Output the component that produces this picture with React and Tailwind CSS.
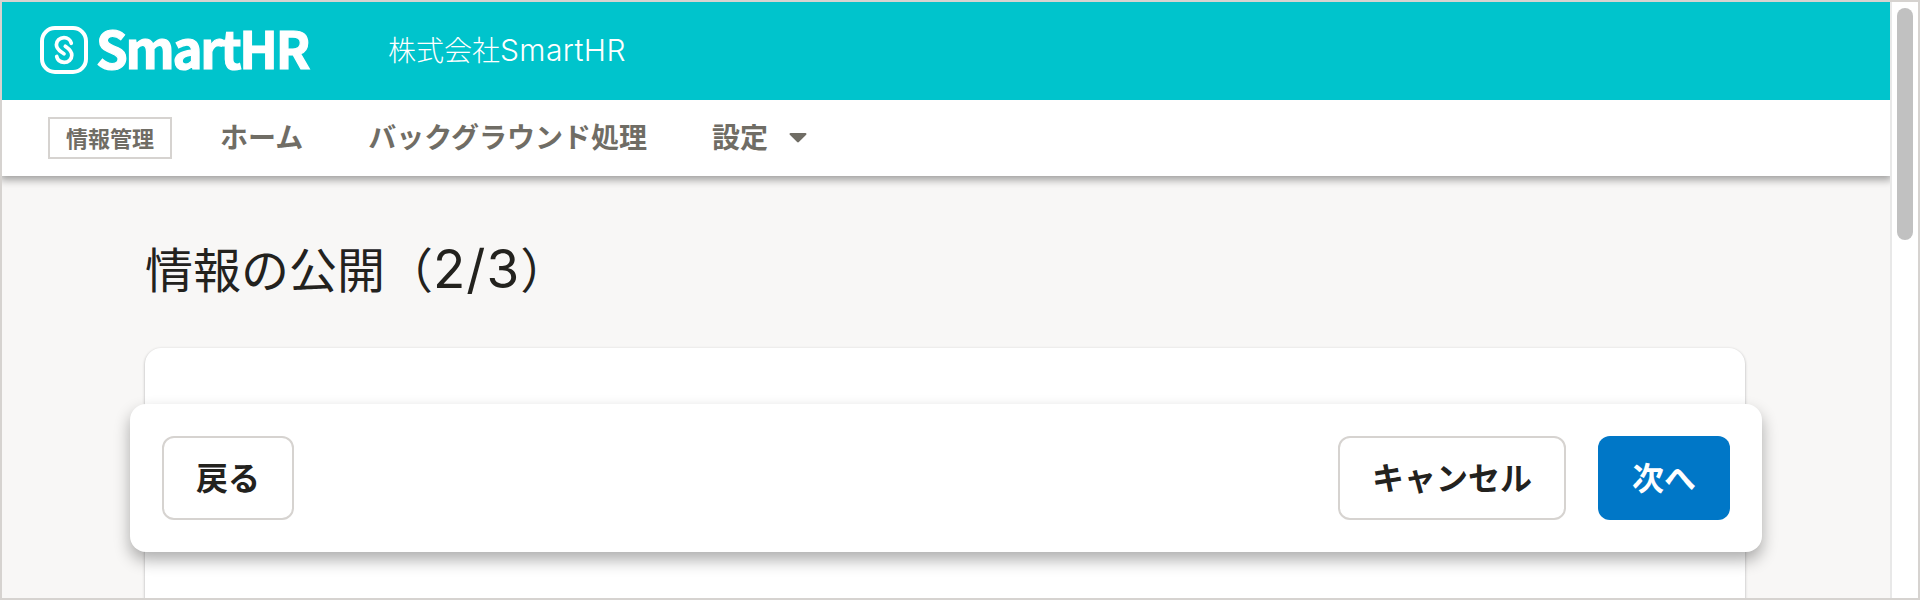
const navItem = "text-[28px] leading-[42px] font-bold whitespace-nowrap -mt-1";

function Logo() {
  return (
    <div className="-mt-0.5 flex items-center text-white">
      <svg width="48" height="48" viewBox="0 0 48 48" fill="none" stroke="currentColor">
        <rect x="2" y="2" width="44" height="44" rx="13" strokeWidth="4" />
        <path
          d="M31.300 17.300 C30.500 14 27.500 11.700 24 11.700 C19.800 11.700 16.400 14.700 16.400 18.800 C16.400 23.800 20.500 25.200 24 27.900 M25.300 20.300 C28.500 22.600 31.800 24.600 31.800 29.200 C31.800 33.300 28.400 36.300 24.200 36.300 C20.500 36.300 17.500 34 16.700 30.500"
          strokeWidth="3.7"
          strokeLinecap="round"
        />
      </svg>
      <span className="-mt-1.5 ml-2 w-[215px] whitespace-nowrap text-[51px] leading-[60px] font-bold tracking-[-2.300px] [-webkit-text-stroke:1.2px_white]">
        SmartHR
      </span>
    </div>
  );
}

function Button({ children, className }) {
  return (
    <button className={`flex h-[84px] items-center justify-center rounded-xl pb-1 text-[32px] leading-none font-bold ${className}`}>
      {children}
    </button>
  );
}

export default function App() {
  return (
    <div className="flex h-[600px] w-[1920px] overflow-hidden border-2 border-[#d6d3d0] bg-white font-['Noto_Sans_CJK_JP',sans-serif] text-[#23221e]">
      <div className="flex w-[1888px] flex-col overflow-hidden bg-[#f8f7f6]">
        <header className="relative z-10 flex h-[98px] shrink-0 items-center bg-[#00c4cc] pl-[38px] text-white">
          <Logo />
          <span className="-mt-1 ml-[77px] text-[28px] leading-[42px] font-light whitespace-nowrap">
            株式会社<span className="font-['Inter'] text-[30px] leading-none tracking-[0.4px]">SmartHR</span>
          </span>
        </header>
        <nav className="relative flex h-[76px] shrink-0 items-center bg-white pl-[46px] text-[#706d65] shadow-[0_2px_8px_2px_rgba(0,0,0,0.36)]">
          <span className="flex h-[42px] w-[124px] items-center justify-center border-2 border-[#d6d3d0] pb-0.5 text-[22px] leading-none font-bold">
            情報管理
          </span>
          <span className={`ml-12 ${navItem}`}>ホーム</span>
          <span className={`ml-[65px] ${navItem}`}>バックグラウンド処理</span>
          <span className={`ml-[65px] ${navItem}`}>設定</span>
          <svg className="ml-[21px]" width="18" height="10" viewBox="0 0 18 10" fill="currentColor">
            <path d="M1.600 0h14.800c1 0 1.400 1 .8 1.700L9.900 9c-.6.6-1.200.6-1.800 0L.8 1.700C.2 1 .6 0 1.600 0z" />
          </svg>
        </nav>
        <main className="flex min-h-0 grow flex-col pt-[55px]">
          <h1 className="ml-[143px] h-[72px] text-[48px] leading-[72px] whitespace-nowrap">
            情報の公開（<span className="font-['Inter'] text-[53px] leading-none tracking-[1px]">2/3</span>）
          </h1>
          <section className="mr-[145px] ml-[143px] mt-[45px] h-[400px] shrink-0 rounded-2xl bg-white pt-14 shadow-[0_1px_3px_rgba(0,0,0,0.3)]">
            <div className="-mr-[17px] -ml-[15px] flex h-[148px] items-center rounded-2xl bg-white px-8 shadow-[0_8px_16px_rgba(0,0,0,0.32)]">
              <Button className="w-[132px] border-2 border-[#d6d3d0] bg-white">戻る</Button>
              <Button className="ml-auto w-[228px] border-2 border-[#d6d3d0] bg-white">キャンセル</Button>
              <Button className="ml-8 w-[132px] bg-[#0077c7] text-white">次へ</Button>
            </div>
          </section>
        </main>
      </div>
      <div className="w-7 border-l-2 border-[#e8e8e8] bg-white pt-1.5 pl-[5px]">
        <div className="h-[232px] w-4 rounded-full bg-[#c1c1c1]" />
      </div>
    </div>
  );
}
